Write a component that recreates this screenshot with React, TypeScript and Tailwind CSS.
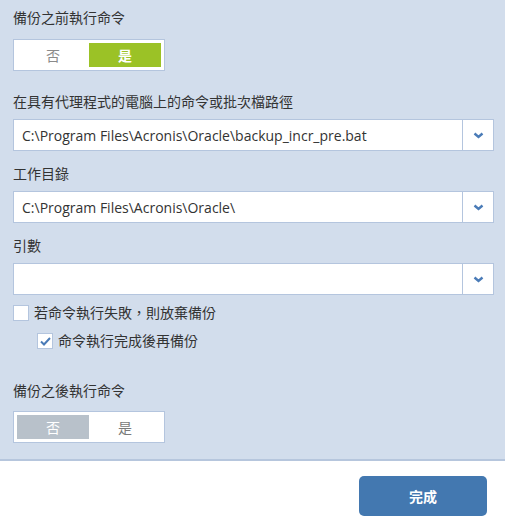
import React, { useState } from 'react'

const font = { fontFamily: '"Open Sans", "Noto Sans CJK TC", sans-serif' }

const Toggle = ({ value, onChange, activeClass }: { value: boolean; onChange: (v: boolean) => void; activeClass: string }) => (
  <div className="flex w-[152px] h-[32px] p-[3px] bg-white border border-[#b4c5de]">
    <button
      onClick={() => onChange(false)}
      className={`flex-1 flex items-center justify-center text-[14px] ${!value ? activeClass : 'text-[#8a8a8a]'}`}
    >
      否
    </button>
    <button
      onClick={() => onChange(true)}
      className={`flex-1 flex items-center justify-center text-[14px] ${value ? activeClass : 'text-[#7a7a7a]'}`}
    >
      是
    </button>
  </div>
)

const Dropdown = ({ value }: { value: string }) => (
  <div className="flex w-[481px] h-[32px] bg-white border border-[#b4c5de]">
    <div className="flex-1 flex items-center pl-[8px] text-[14px] text-[#333]">{value}</div>
    <div className="w-[31px] flex items-center justify-center border-l border-[#b4c5de]">
      <svg width="11" height="7" viewBox="0 0 11 7">
        <path d="M1.5 1.5 L5.5 5 L9.5 1.5" fill="none" stroke="#4a7bb7" strokeWidth="2.4" />
      </svg>
    </div>
  </div>
)

const Checkbox = ({ checked, label, onClick }: { checked: boolean; label: string; onClick: () => void }) => (
  <div className="flex items-center gap-[5px] h-[16px] cursor-pointer" onClick={onClick}>
    <div className="w-[16px] h-[16px] bg-white border border-[#b4c5de] flex items-center justify-center">
      {checked && (
        <svg width="11" height="9" viewBox="0 0 11 9">
          <path d="M1 4.5 L4 7.5 L10 1" fill="none" stroke="#4a7bb7" strokeWidth="2" />
        </svg>
      )}
    </div>
    <span className="text-[14px] text-[#333] leading-[20px]">{label}</span>
  </div>
)

const Label = ({ children, className }: { children: React.ReactNode; className: string }) => (
  <div className={`h-[20px] leading-[20px] text-[14px] text-[#333] ${className}`}>{children}</div>
)

const App = () => {
  const [pre, setPre] = useState(true)
  const [post, setPost] = useState(false)
  const [abort, setAbort] = useState(false)
  const [wait, setWait] = useState(true)

  return (
    <div className="w-[505px] h-[525px] flex flex-col bg-white" style={font}>
      <div className="h-[459px] bg-[#d2ddec] px-[13px] flex flex-col">
        <Label className="mt-[8px]">備份之前執行命令</Label>
        <div className="mt-[11px]">
          <Toggle value={pre} onChange={setPre} activeClass="bg-[#9bc226] text-white font-bold" />
        </div>

        <Label className="mt-[21px]">在具有代理程式的電腦上的命令或批次檔路徑</Label>
        <div className="mt-[7px]">
          <Dropdown value="C:\Program Files\Acronis\Oracle\backup_incr_pre.bat" />
        </div>

        <Label className="mt-[13px]">工作目錄</Label>
        <div className="mt-[7px]">
          <Dropdown value="C:\Program Files\Acronis\Oracle\" />
        </div>

        <Label className="mt-[13px]">引數</Label>
        <div className="mt-[7px]">
          <Dropdown value="" />
        </div>

        <div className="mt-[10px]">
          <Checkbox checked={abort} label="若命令執行失敗，則放棄備份" onClick={() => setAbort(!abort)} />
        </div>
        <div className="mt-[12px] ml-[24px]">
          <Checkbox checked={wait} label="命令執行完成後再備份" onClick={() => setWait(!wait)} />
        </div>

        <Label className="mt-[32px]">備份之後執行命令</Label>
        <div className="mt-[10px]">
          <Toggle value={post} onChange={setPost} activeClass="bg-[#b8c1ca] text-white" />
        </div>
      </div>

      <div className="flex-1 border-t-2 border-[#b6c6dd] flex justify-end items-start pt-[15px] pr-[18px]">
        <button className="w-[128px] h-[40px] rounded-[5px] bg-[#4378b0] text-white text-[14px] font-bold">完成</button>
      </div>
    </div>
  )
}

export default App
